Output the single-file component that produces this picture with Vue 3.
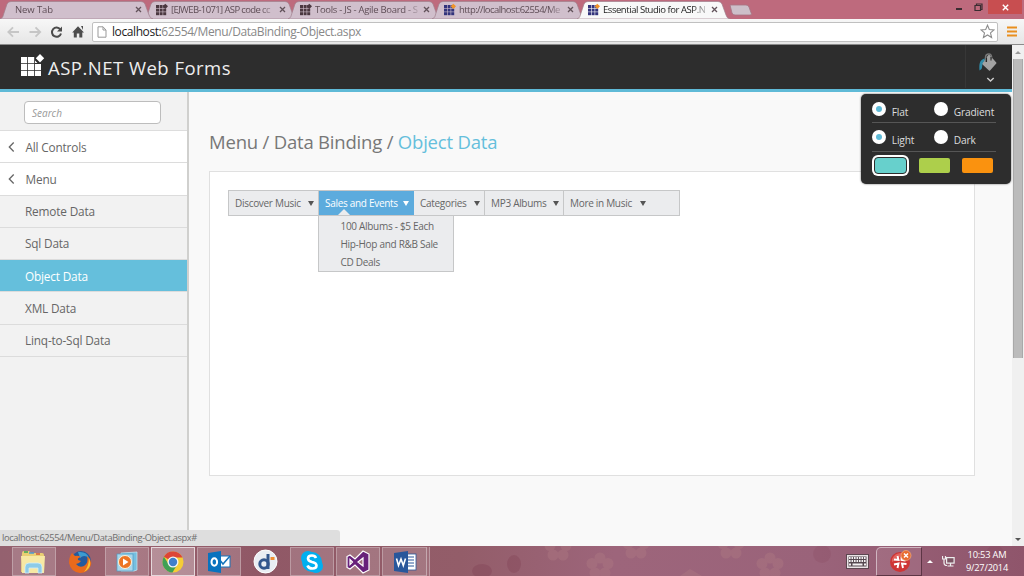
<script setup>
const tabs = [
  { title: 'New Tab', kind: 'blank' },
  { title: '[EJWEB-1071] ASP code cc', kind: 'mono' },
  { title: 'Tools - JS - Agile Board - S', kind: 'mono' },
  { title: 'http://localhost:62554/Me', kind: 'color' },
  { title: 'Essential Studio for ASP.N', kind: 'color', active: true }
]
const sizes = ['t0', 't1', 't2', 't3', 't4']
const items = ['Remote Data', 'Sql Data', 'Object Data', 'XML Data', 'Linq-to-Sql Data']
const menu = [
  { label: 'Discover Music', cls: 'm0' },
  { label: 'Sales and Events', cls: 'm1', open: true },
  { label: 'Categories', cls: 'm2' },
  { label: 'MP3 Albums', cls: 'm3' },
  { label: 'More in Music', cls: 'm4' }
]
const sub = ['100 Albums - $5 Each', 'Hip-Hop and R&B Sale', 'CD Deals']
const cells = [0, 4, 8]
</script>

<template>
  <div class="screen">
    <div class="strip">
      <div v-for="(t, i) in tabs" :key="i" class="tab" :class="[sizes[i], { active: t.active }]">
        <svg class="shape" width="153" height="19" viewBox="0 0 153 19">
          <path d="M0 19 C3 18 3 16 4 13 L7 4 Q8 1.5 11 1.5 H141 Q144 1.5 145 4 L149 15 Q150 18.500 153 19 Z" :fill="t.active ? '#f8f8f8' : '#d0bfcc'" stroke="#a07f8c" stroke-width=".7" />
        </svg>
        <svg v-if="t.kind !== 'blank'" class="fav" width="12" height="12" viewBox="0 0 12 12">
          <g :fill="t.kind === 'color' ? '#33347c' : '#4b3840'">
            <template v-for="y in cells" :key="y">
              <rect v-for="x in cells" :key="x" :x="x * .9" :y="y * .9 + 1" width="3" height="3" />
            </template>
          </g>
          <path d="M9.300 -.3 L12 2.300 L9.300 5 L6.700 2.300 Z" :fill="t.kind === 'color' ? '#f19328' : '#4b3840'" />
        </svg>
        <span class="title">{{ t.title }}</span>
        <svg class="close" width="7" height="7" viewBox="0 0 7 7"><path d="M1 1 L6 6 M6 1 L1 6" stroke="#62525a" stroke-width="1.300" /></svg>
      </div>
      <svg class="newtab" width="24" height="12" viewBox="0 0 24 12"><path d="M1 1 H17 Q19 1 20 3 L22.500 10 Q22.500 11 21 11 H6 Q4 11 3 9 Z" fill="#cdbfc9" stroke="#a67584" stroke-width=".8" /></svg>
      <div class="winctl">
        <svg width="40" height="14" viewBox="0 0 40 14">
          <path d="M6 9 h6" stroke="#3a2c31" stroke-width="2" />
          <path d="M25 5.500 h5.500 v5 h-5.500 z M26.500 5 v-1 h5.500 v5.500 h-1" fill="none" stroke="#3a2c31" stroke-width="1.200" />
        </svg>
        <div class="x"><svg width="7" height="7" viewBox="0 0 7 7"><path d="M.8 .8 L6.200 6.200 M6.200 .8 L.8 6.200" stroke="#fff" stroke-width="1.400" /></svg></div>
      </div>
    </div>

    <div class="toolbar">
      <svg class="nav" width="92" height="26" viewBox="0 0 92 26">
        <g fill="none" stroke="#c6c6c6" stroke-width="1.800">
          <path d="M19 13 H8.500 M13 8.300 L8.300 13 L13 17.700" />
          <path d="M29.500 13 H40 M35.500 8.300 L40.200 13 L35.500 17.700" />
        </g>
        <path d="M60.300 10.500 A4.600 4.600 0 1 0 61 14.500" fill="none" stroke="#4c4c4c" stroke-width="2" />
        <path d="M62 7.500 V12.500 H57 Z" fill="#4c4c4c" />
        <path d="M78 7.300 L84 13.500 H82.300 V18.500 H79.300 V14.500 H76.800 V18.500 H73.800 V13.500 H72.200 Z M81 7 h2 v4 z" fill="#4c4c4c" />
      </svg>
      <div class="omni">
        <svg width="10" height="12" viewBox="0 0 10 12"><path d="M1 .8 H6 L9 4 V11.200 H1 Z M6 .8 V4 H9" fill="#fff" stroke="#999" /></svg>
        <span class="url"><b>localhost:</b>62554/Menu/DataBinding-Object.aspx</span>
        <svg class="star" width="15" height="15" viewBox="0 0 15 15"><path d="M7.500 1.200 L9.300 5.500 L14 5.900 L10.500 8.900 L11.600 13.500 L7.500 11 L3.400 13.500 L4.500 8.900 L1 5.900 L5.700 5.500 Z" fill="#fff" stroke="#8d8d8d" stroke-width="1.100" /></svg>
      </div>
      <svg class="burger" width="10" height="11" viewBox="0 0 10 11"><path d="M0 1.500 H10 M0 5.500 H10 M0 9.500 H10" stroke="#e98f1f" stroke-width="2" /></svg>
    </div>

    <div class="page">
      <div class="content">
        <header class="head">
          <svg class="logo" width="24" height="24" viewBox="0 0 24 24">
            <path d="M0 3 h6.200 v6.200 h-6.200z M7 3 h6.200 v6.200 h-6.200z M0 10 h6.200 v6.200 h-6.200z M7 10 h6.200 v6.200 h-6.200z M14 10 h6 v6.200 h-6z M0 17 h6.200 v5 h-6.200z M7 17 h6.200 v5 h-6.200z M14 17 h6 v5 h-6z M14 6.500 l2.500 2.500 h-2.500z M19 0 l4.200 4.200 l-4.200 4.200 l-4.200 -4.200z" fill="#fff" />
          </svg>
          <h1>ASP.NET Web Forms</h1>
          <div class="theme">
            <svg width="46" height="43" viewBox="0 0 46 43">
              <path d="M24 10.500 L30.700 18 L24.500 25 L17.500 18.500 Z" fill="#a3a3a3" stroke="#a3a3a3" stroke-width="1.500" stroke-linejoin="round" />
              <path d="M20.500 17 V12.500 Q20.500 9 24 9 Q26 9 26.500 11.500 V14" fill="none" stroke="#777" stroke-width="1.500" />
              <path d="M21.500 12.500 V17 M26 12 V15.500" stroke="#292929" stroke-width="1.100" />
              <path d="M14.500 25.500 C14 19 14.500 14.500 20 13.500 L19 16.500 C16.500 18 18 21 16.500 24 Z" fill="#318ca9" />
              <path d="M22.300 33 L25.500 36 L28.700 33" fill="none" stroke="#ccc" stroke-width="1.500" />
            </svg>
          </div>
        </header>
        <div class="body">
          <aside>
            <div class="search"><div class="box">Search</div></div>
            <div class="row white"><svg width="7" height="12" viewBox="0 0 7 12"><path d="M5.700 1.500 L1.300 6 L5.700 10.500" fill="none" stroke="#666" stroke-width="1.300" /></svg><span>All Controls</span></div>
            <div class="row white"><svg width="7" height="12" viewBox="0 0 7 12"><path d="M5.700 1.500 L1.300 6 L5.700 10.500" fill="none" stroke="#666" stroke-width="1.300" /></svg><span>Menu</span></div>
            <div v-for="(s, i) in items" :key="s" class="row" :class="{ sel: i === 2 }"><span>{{ s }}</span></div>
          </aside>
          <main>
            <h2>Menu / Data Binding / <em>Object Data</em></h2>
            <div class="panel">
              <div class="menu">
                <div v-for="m in menu" :key="m.label" class="mi" :class="[m.cls, { open: m.open }]">
                  <span>{{ m.label }}</span>
                  <i class="caret"></i>
                  <template v-if="m.open">
                    <i class="notch"></i>
                    <div class="sub"><div v-for="s in sub" :key="s">{{ s }}</div></div>
                  </template>
                </div>
              </div>
            </div>
          </main>
        </div>
        <div class="picker">
          <div class="opts"><span class="radio on"></span><label>Flat</label><span class="radio"></span><label>Gradient</label></div>
          <div class="opts second"><span class="radio on"></span><label>Light</label><span class="radio"></span><label>Dark</label></div>
          <div class="swatches"><i class="teal"></i><i class="green"></i><i class="orange"></i></div>
        </div>
        <div class="status">localhost:62554/Menu/DataBinding-Object.aspx#</div>
      </div>
      <div class="scroll"><i class="up"></i><div class="thumb"></div><i class="down"></i></div>
    </div>

    <div class="taskbar">
      <svg class="floral" width="1024" height="30" viewBox="0 0 1024 30">
        <defs>
          <linearGradient id="bar" x1="0" x2="1" y1="0" y2="0"><stop offset="0" stop-color="#94616f" /><stop offset=".1" stop-color="#9a626f" /><stop offset=".25" stop-color="#905866" /><stop offset=".45" stop-color="#935d69" /><stop offset=".6" stop-color="#9d657b" /><stop offset=".8" stop-color="#9a637a" /><stop offset="1" stop-color="#8f556b" /></linearGradient>
          <g id="bloom"><circle cy="-8" r="5.500" /><circle cx="8" cy="-2.500" r="5.500" /><circle cx="5" cy="7" r="5.500" /><circle cx="-5" cy="7" r="5.500" /><circle cx="-8" cy="-2.500" r="5.500" /></g>
        </defs>
        <rect width="1024" height="30" fill="url(#bar)" />
        <g fill="#ad7882" opacity=".45">
          <use href="#bloom" x="600" y="20" /><use href="#bloom" x="770" y="20" /><use href="#bloom" x="558" y="2" /><use href="#bloom" x="636" y="0" /><use href="#bloom" x="731" y="0" /><path d="M680 30 L690 23 L702 30Z" />
        </g>
        <g fill="#7d3a50" opacity=".3"><ellipse cx="482" cy="25" rx="10" ry="7" /><ellipse cx="514" cy="18" rx="7" ry="9" /><circle cx="822" cy="8" r="9" opacity=".5" /><circle cx="995" cy="8" r="9" opacity=".6" /></g>
      </svg>
      <div class="apps">
        <div class="app framed w1"><svg width="26" height="24" viewBox="0 0 26 24">
          <path d="M2 3 Q2 1 4 1 H9 L11 3 H22 Q24 3 24 5 V22 H1 Z" fill="#e9cf73" />
          <path d="M1 6 H25 L24 23 H2 Z" fill="#f7e8a4" /><path d="M4 2 h4" stroke="#3ca355" stroke-width="1.500" /><path d="M16 4 h4" stroke="#d35b3b" stroke-width="1.500" /><path d="M9 3 h5" stroke="#4e9ad0" stroke-width="1.500" />
          <path d="M5 23 V17 Q5 13 9 13 H18 Q22 13 22 17 V23 H18 V18 H9 V23 Z" fill="#8dcbe8" stroke="#d3effa" stroke-width=".8" /></svg></div>
        <div class="app w2"><svg width="24" height="24" viewBox="0 0 24 24">
          <circle cx="13" cy="11" r="10" fill="#245a9d" /><path d="M10 2 Q19 1 21 8 Q16 4 12 8 Z" fill="#3c9bd0" />
          <path d="M4 3 L7 6 Q10 5 13 7 Q9 8 10 10 L13 11 Q11 14 8 14 Q11 18 16 16 Q21 13 19 6 Q24 10 23 15 Q20 23 12 23 Q3 22 1 13 Q1 7 4 3Z" fill="#e96a1c" />
          <path d="M21 8 Q25 18 16 22 Q21 16 21 8" fill="#f8c332" /></svg></div>
        <div class="app framed w3"><svg width="22" height="22" viewBox="0 0 22 22">
          <path d="M5 2 L21 1 V19 L18 20 H5Z" fill="#76bfe0" stroke="#c7e9f5" stroke-width=".7" /><rect x="1" y="3" width="16" height="17" fill="#a9d7eb" stroke="#4d9cc4" stroke-width=".7" />
          <circle cx="9" cy="11" r="6.500" fill="#ed7524" stroke="#fff2d9" /><path d="M7 7.500 L12.500 11 L7 14.500Z" fill="#fff" /></svg></div>
        <div class="app framed cur w4"><svg width="24" height="24" viewBox="0 0 24 24">
          <circle cx="12" cy="12" r="10.500" fill="#f5cd36" /><path d="M12 12 L2.900 6.700 A10.500 10.500 0 0 1 21.500 7.500 H12Z" fill="#dc4537" /><path d="M2.900 6.700 A10.500 10.500 0 0 0 11.500 22.500 L16.500 14 L7.700 14.300Z" fill="#3fa055" />
          <circle cx="12" cy="12" r="5.500" fill="#f4f4f4" /><circle cx="12" cy="12" r="4.200" fill="#3f7fca" /></svg></div>
        <div class="app framed w5"><svg width="24" height="24" viewBox="0 0 24 24"><rect x="12" y="6" width="11" height="11" fill="#fff" stroke="#1473ba" /><path d="M12 9 L16 14 L23 6" fill="none" stroke="#1473ba" stroke-width="1.500" /><path d="M1 3 L14 1 V23 L1 21Z" fill="#0872be" /><ellipse cx="7.300" cy="12" rx="2.800" ry="3.700" fill="none" stroke="#fff" stroke-width="2" /></svg></div>
        <div class="app w6"><svg width="25" height="25" viewBox="0 0 25 25"><circle cx="12.500" cy="12.500" r="11.500" fill="#e9edf3" stroke="#fff" /><circle cx="11" cy="15" r="4.200" fill="none" stroke="#32568c" stroke-width="3" /><path d="M15 5 V20" stroke="#32568c" stroke-width="3" /><rect x="17.500" y="8" width="4" height="3" fill="#ef8d32" /></svg></div>
        <div class="app framed w7"><svg width="24" height="24" viewBox="0 0 24 24"><circle cx="8" cy="8" r="7" fill="#00aff0" /><circle cx="16" cy="16" r="7" fill="#00aff0" /><circle cx="12" cy="12" r="10" fill="#00aff0" /><path d="M16 8 Q15 5.500 12 5.500 Q8 5.500 8 8.500 Q8 11 12 12 Q16.500 13 16.500 15.500 Q16.500 18.500 12.500 18.500 Q8.500 18.500 7.500 15.500" fill="none" stroke="#fff" stroke-width="2.600" /></svg></div>
        <div class="app framed w8"><svg width="24" height="24" viewBox="0 0 24 24"><path fill-rule="evenodd" d="M17 1 L23 4 V20 L17 23 L9 15 L4 19 L1 17.500 V6.500 L4 5 L9 9Z M4 9.500 V14.500 L6.500 12Z M17 8 L12 12 L17 16Z" fill="#68217a" stroke="#fff" stroke-width="1.200" /></svg></div>
        <div class="app framed w9"><svg width="24" height="24" viewBox="0 0 24 24"><rect x="12" y="4" width="11" height="16" fill="#fff" stroke="#29579b" stroke-width=".8" /><path d="M15 7 h6 M15 10 h6 M15 13 h6 M15 16 h6" stroke="#29579b" /><path d="M1 3 L15 1 V23 L1 21Z" fill="#29579b" /><path d="M3.500 8.500 L5.500 15.500 L8 9 L10.300 15.500 L12.500 8.500" fill="none" stroke="#fff" stroke-width="1.600" /></svg></div>
        <div class="stack"></div>
      </div>
      <div class="tray">
        <svg class="kb" width="23" height="15" viewBox="0 0 23 15"><rect x=".5" y=".5" width="22" height="14" fill="#e9e2e5" stroke="#5d4650" /><rect x="2.500" y="2.500" width="18" height="10" fill="#564850" /><path d="M3 4 H20 M3 7 H20" stroke="#f4f0f2" stroke-width="1.800" stroke-dasharray="1.600 .9" /><path d="M3 10.500 h2 M6.500 10.500 h10 M18 10.500 h2" stroke="#f4f0f2" stroke-width="1.800" /></svg>
        <div class="alert"><svg width="24" height="24" viewBox="0 0 24 24"><circle cx="11" cy="13" r="10" fill="#cf3535" /><path d="M3 10 Q6 3 14 4 Q12 8 3 13Z" fill="#e97972" opacity=".7" /><path d="M8.500 7 L9.500 11 L5 10.500 M12.500 7.500 L12.500 11 L16.500 11.500 M5 15.500 L9.500 14.500 L8.500 19 M17.500 15 L13 14.500 L14 19" fill="none" stroke="#fff" stroke-width="1.900" /><circle cx="17" cy="6.500" r="5" fill="#e86c31" stroke="#f2ad7d" stroke-width=".7" /><path d="M15 4.500 L19 8.500 M19 4.500 L15 8.500" stroke="#fff" stroke-width="1.500" /></svg></div>
        <i class="more"></i>
        <svg class="net" width="13" height="12" viewBox="0 0 13 12"><rect x="4.600" y="2.600" width="7.500" height="5.500" fill="#7a5362" stroke="#eee" stroke-width="1.200" /><path d="M8.500 8 V10.500 M5.500 11 H11.500 M2 4 V8 Q2 10.500 5 10.500 M.5 1 V4 H3.500 V1" fill="none" stroke="#eee" stroke-width="1.200" /></svg>
        <div class="clock"><div class="time">10:53 AM</div><div class="date">9/27/2014</div></div>
      </div>
    </div>
  </div>
</template>

<style>
html, body { overflow: hidden; }
</style>

<style scoped>
* { box-sizing: border-box; }
.screen { width: 1024px; height: 576px; display: flex; flex-direction: column; overflow: hidden; font-family: "Open Sans", "Noto Sans", sans-serif; white-space: nowrap; background: #f9f9f9; }
svg { display: block; flex: none; }
.strip { height: 19px; background: #be6a7d; display: flex; flex: none; }
.tab { position: relative; width: 152px; height: 19px; margin-right: -8px; display: flex; align-items: center; padding: 0 10px 0 12px; flex: none; font-size: 9.500px; color: #5e4d56; z-index: 3; }
.tab.t0 { padding-left: 15px; z-index: 4; }
.tab.t4 { color: #222; z-index: 5; }
.shape { position: absolute; left: 0; top: 0; z-index: -1; }
.t4 .shape { left: 1px; }
.fav { margin-right: 3px; overflow: visible; }
.title { width: 104px; line-height: 14px; margin-top: 1px; letter-spacing: -.42px; -webkit-mask-image: linear-gradient(90deg, #000 86%, transparent 103%); mask-image: linear-gradient(90deg, #000 86%, transparent 103%); }
.t0 .title { width: 119px; letter-spacing: -.1px; }
.t1 .title { letter-spacing: -.62px; }
.t2 .title { letter-spacing: -.3px; }
.t3 .title { letter-spacing: -.56px; }
.t4 .title { letter-spacing: -.45px; }
.close { margin-left: auto; }
.newtab { margin: 4px 0 0 9px; }
.winctl { margin-left: auto; display: flex; align-items: flex-start; }
.winctl .x { width: 34px; height: 14px; background: #c84e50; display: flex; align-items: center; justify-content: center; margin: 0 2px 0 -1px; }
.winctl > svg { margin-right: -1px; }

.toolbar { height: 26px; flex: none; display: flex; align-items: center; background: linear-gradient(#f7f7f7, #e6e6e6); border-bottom: 1px solid #8b8b8b; }
.omni { width: 906px; height: 20px; background: #fff; border: 1px solid #c0c0c0; border-radius: 2px; display: flex; align-items: center; padding: 0 2px 0 4px; }
.url { margin-left: 5px; font-size: 12px; color: #888; letter-spacing: -.41px; line-height: 18px; }
.url b { font-weight: 400; color: #1c1c1c; }
.star { margin-left: auto; }
.burger { margin-left: 9px; }

.page { flex: 1; display: flex; min-height: 0; }
.content { width: 1012px; position: relative; display: flex; flex-direction: column; background: #f9f9f9; }
.head { height: 47px; flex: none; background: #2d2d2d; border-bottom: 3px solid #5fbad7; display: flex; align-items: flex-start; padding: 0; }
.logo { margin: 9px 0 0 21px; }
h1 { margin: 9px 0 0 3px; font-size: 18.500px; line-height: 28px; font-weight: 400; color: #eee; letter-spacing: .48px; }
.theme { margin-left: auto; width: 47px; height: 43px; border-left: 1px solid #373737; }
.theme svg { margin-left: -1px; }
.body { flex: 1; display: flex; min-height: 0; }
aside { width: 189px; border-right: 2px solid #d0d0ce; background: #f2f2f2; }
.search { height: 39px; border-bottom: 1px solid #ddd; padding: 9px 0 0 24px; }
.box { width: 137px; height: 23px; border: 1px solid #bdbdbd; border-radius: 4px; background: #fff; font-style: italic; font-size: 10px; line-height: 22px; padding-left: 7px; color: #999; }
.row { height: 32.250px; border-bottom: 1px solid #dcdcdc; display: flex; align-items: center; font-size: 11.800px; letter-spacing: -.17px; color: #666; padding-left: 25px; }
.row.white { background: #fff; padding-left: 8px; }
.row.white svg { margin-right: 10.500px; }
.row.sel { background: #65bfdc; color: #fff; }
main { flex: 1; padding: 37px 0 0 20px; }
h2 { margin: 0; font-size: 18.500px; line-height: 26px; font-weight: 400; color: #777; letter-spacing: -.2px; }
h2 em { font-style: normal; color: #65bfdc; }
.panel { margin-top: 16px; width: 766px; height: 305px; border: 1px solid #e0e0e0; background: #fff; padding: 18px 0 0 18px; }
.menu { width: 452px; height: 26px; border: 1px solid #c6c7c8; background: #ebecee; display: flex; font-size: 10px; letter-spacing: -.3px; color: #666; }
.mi { position: relative; height: 24px; padding: 0 4px 0 6px; display: flex; align-items: center; justify-content: space-between; border-right: 1px solid #c6c7c8; }
.m0 { width: 90px; } .m1 { width: 95px; } .m2 { width: 71px; } .m3 { width: 79px; } .m4 { width: 86px; border: 0; }
.mi.open { background: #5cabdd; color: #fff; border-right-color: #5cabdd; }
.caret { border: 3.500px solid transparent; border-top: 5px solid #555; border-bottom: 0; }
.open .caret { border-top-color: #fff; }
.notch { position: absolute; left: 19px; bottom: 0; border: 6px solid transparent; border-bottom-color: #ebecee; border-top: 0; }
.sub { position: absolute; left: -1px; top: 24px; width: 136px; height: 57px; border: 1px solid #c6c7c8; background: #ebecee; color: #666; padding: 1px 0 0 21.500px; line-height: 18px; }

.picker { position: absolute; left: 861px; top: 49px; width: 150px; height: 90px; border-radius: 5px; background: #2d2d2d; padding: 2px 15px 0 11px; box-shadow: 0 0 2px #555; }
.opts { height: 27px; border-bottom: 1px solid #565656; display: flex; align-items: flex-start; padding-top: 7px; color: #ddd; font-size: 10.200px; letter-spacing: -.15px; }
.opts.second { height: 29px; padding-top: 8px; }
.radio { width: 14px; height: 14px; margin-top: -1px; border-radius: 50%; background: #fff; display: flex; align-items: center; justify-content: center; }
.radio.on::after { content: ""; width: 6px; height: 6px; border-radius: 50%; background: #5fbad7; }
.opts label { line-height: 16px; margin-left: 6px; width: 43px; padding-top: 1px; }
.swatches { display: flex; padding-top: 2px; width: 130px; }
.swatches i { width: 31px; height: 15px; border-radius: 2px; margin: 4px 6px 0; flex: none; }
.swatches .teal { background: #67d0cc; border: 1px solid #2d2d2d; box-shadow: 0 0 0 2px #fff; margin: 3px 6px 0 2px; width: 33px; height: 17px; border-radius: 4px; }
.green { background: #adcf4b; } .orange { background: #fa920f; }
.status { position: absolute; left: 0; bottom: 0; width: 340px; height: 16px; background: #dedede; border-top-right-radius: 3px; color: #6d6d6d; font-size: 9.300px; letter-spacing: -.4px; line-height: 16px; padding-left: 2px; }

.scroll { width: 12px; background: #f0f0f0; display: flex; flex-direction: column; align-items: center; }
.up { border: 3px solid transparent; border-bottom: 3px solid #999; border-top: 0; margin-top: 6px; }
.thumb { width: 10px; height: 299px; margin-top: 5px; background: #bbb; border-left: 1px solid #a9a9a9; border-right: 1px solid #a9a9a9; }
.down { border: 3px solid transparent; border-top: 3px solid #555; border-bottom: 0; margin-top: auto; margin-bottom: 5px; }

.taskbar { position: relative; height: 30px; flex: none; display: flex; z-index: 0; }
.floral { position: absolute; left: 0; top: 0; z-index: -1; }
.apps { display: flex; padding-left: 12px; gap: 2px; }
.app { height: 29px; margin-top: 1px; display: flex; align-items: center; justify-content: center; width: 44.300px; }
.framed { border: 1px solid rgba(255,255,255,.28); background: rgba(255,255,255,.16); }
.cur { border-color: rgba(255,255,255,.65); background: rgba(255,255,255,.3); }
.stack { width: 4px; height: 29px; margin: 1px 0 0 -3px; border-right: 1px solid rgba(255,255,255,.3); background: rgba(255,255,255,.12); }
.w1 { padding-right: 3px; }
.tray { margin-left: auto; display: flex; align-items: center; color: #fff; width: 178px; }
.alert { margin-left: 7px; width: 46px; height: 29px; border: 1px solid rgba(255,255,255,.5); border-right-color: #5d3545; border-bottom-color: #5d3545; border-radius: 5px 0 0; background: rgba(235,205,215,.12); display: flex; align-items: center; justify-content: center; padding-left: 3px; }
.more { border: 3px solid transparent; border-bottom: 3px solid #fff; border-top: 0; margin-left: 5px; }
.net { margin-left: 9px; }
.clock { margin-left: 10px; width: 44px; font-size: 9.300px; letter-spacing: -.2px; line-height: 13px; display: flex; flex-direction: column; align-items: center; }
</style>
